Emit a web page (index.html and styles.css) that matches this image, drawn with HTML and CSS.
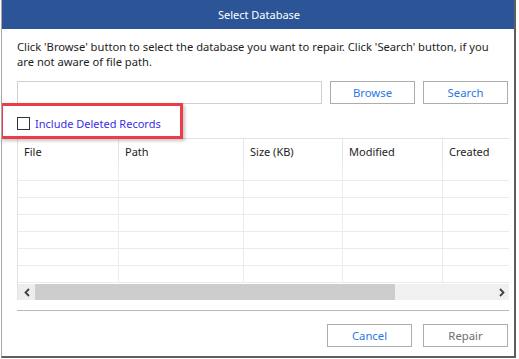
FILE: index.html
```html
<!DOCTYPE html>
<html>
<head>
<meta charset="utf-8">
<link rel="stylesheet" href="styles.css">
</head>
<body>
<div class="window">
  <div class="titlebar">Select Database</div>
  <div class="content">
    <p class="desc"><span class="line">Click 'Browse' button to select the database you want to repair. Click 'Search' button, if you</span><br><span class="line">are not aware of file path.</span></p>
    <div class="pathrow">
      <div class="field"></div>
      <div class="btn">Browse</div>
      <div class="btn">Search</div>
    </div>
    <div class="checkrow">
      <span class="box"></span>
      <span class="label">Include Deleted Records</span>
      <div class="highlight"></div>
    </div>
    <div class="table">
      <div class="row head">
        <div class="c c1">File</div>
        <div class="c c2">Path</div>
        <div class="c c3">Size (KB)</div>
        <div class="c c4">Modified</div>
        <div class="c c5">Created</div>
      </div>
      <div class="row"><div class="c c1"></div><div class="c c2"></div><div class="c c3"></div><div class="c c4"></div><div class="c c5"></div></div>
      <div class="row"><div class="c c1"></div><div class="c c2"></div><div class="c c3"></div><div class="c c4"></div><div class="c c5"></div></div>
      <div class="row"><div class="c c1"></div><div class="c c2"></div><div class="c c3"></div><div class="c c4"></div><div class="c c5"></div></div>
      <div class="row"><div class="c c1"></div><div class="c c2"></div><div class="c c3"></div><div class="c c4"></div><div class="c c5"></div></div>
      <div class="row"><div class="c c1"></div><div class="c c2"></div><div class="c c3"></div><div class="c c4"></div><div class="c c5"></div></div>
      <div class="row"><div class="c c1"></div><div class="c c2"></div><div class="c c3"></div><div class="c c4"></div><div class="c c5"></div></div>
      <div class="row"><div class="c c1"></div><div class="c c2"></div><div class="c c3"></div><div class="c c4"></div><div class="c c5"></div></div>
      <div class="hscroll">
        <div class="arrow left"><svg width="8" height="9" viewBox="0 0 8 9"><path d="M6 1 L2.5 4.5 L6 8" fill="none" stroke="#404040" stroke-width="1.8"/></svg></div>
        <div class="thumb"></div>
        <div class="track"></div>
        <div class="arrow right"><svg width="8" height="9" viewBox="0 0 8 9"><path d="M2 1 L5.5 4.5 L2 8" fill="none" stroke="#404040" stroke-width="1.8"/></svg></div>
      </div>
    </div>
    <div class="sep"></div>
    <div class="actions">
      <div class="btn">Cancel</div>
      <div class="btn disabled">Repair</div>
    </div>
  </div>
</div>
</body>
</html>
```
FILE: styles.css
```css
html, body {
  margin: 0;
  padding: 0;
  background: #ffffff;
}
body {
  font-family: "Noto Sans", "Open Sans", "DejaVu Sans", sans-serif;
  font-size: 11px;
  color: #1e1e1e;
}
.window {
  margin-left: 1px;
  width: 512px;
  height: 356px;
  border-left: 1px solid #a8a8a8;
  border-right: 2px solid #5e5e5e;
  border-bottom: 2px solid #5e5e5e;
  background: #ffffff;
  display: flex;
  flex-direction: column;
  overflow: hidden;
}
.titlebar {
  flex-shrink: 0;
  height: 29px;
  background: #2b5597;
  color: #ffffff;
  font-size: 11px;
  display: flex;
  align-items: center;
  justify-content: center;
  padding-left: 2px;
}
.content {
  padding: 10px 5px 0 15px;
  display: flex;
  flex-direction: column;
}
.desc {
  margin: 0;
  line-height: 15px;
  font-size: 11.2px;
  white-space: nowrap;
}
.pathrow {
  margin-top: 12px;
  display: flex;
  gap: 8px;
  height: 23px;
  margin-right: 1px;
}
.field {
  width: 305px;
  box-sizing: border-box;
  border: 1px solid #d0d0d0;
}
.btn {
  width: 85px;
  height: 23px;
  box-sizing: border-box;
  border: 1px solid #acacac;
  color: #2a78e4;
  display: flex;
  align-items: center;
  justify-content: center;
  font-size: 11.3px;
}
.btn.disabled {
  color: #6e6e6e;
}
.checkrow {
  position: relative;
  height: 34px;
  box-sizing: border-box;
  padding-top: 4px;
  display: flex;
  align-items: center;
  gap: 5px;
}
.box {
  width: 13px;
  height: 13px;
  box-sizing: border-box;
  border: 1px solid #333333;
  background: #ffffff;
}
.label {
  color: #3a2ee6;
  font-size: 11px;
}
.highlight {
  position: absolute;
  left: -17px;
  top: -1px;
  width: 183px;
  height: 36px;
  box-sizing: border-box;
  border: 3px solid #ee3b47;
  box-shadow: 2px 2px 3px rgba(0,0,0,0.22);
}
.table {
  border-top: 1px solid #e2e2e2;
  border-left: 1px solid #e2e2e2;
  width: 491px;
}
.row {
  display: flex;
  height: 17px;
  box-sizing: border-box;
  border-bottom: 1px solid #ebebeb;
}
.row.head {
  height: 25px;
  border-bottom: none;
}
.c {
  box-sizing: border-box;
  border-right: 1px solid #ebebeb;
  height: 100%;
}
.head .c {
  border-right-color: #e6e6e6;
  padding: 5px 0 0 6px;
  font-size: 11px;
  color: #1e1e1e;
}
.c1 { width: 101px; }
.c2 { width: 125px; }
.c3 { width: 99px; }
.c4 { width: 100px; }
.c5 { width: 66px; border-right: none; }
.head .c5 { border-right: none; }
.hscroll {
  margin-top: 1px;
  height: 16px;
  display: flex;
  background: #f0f0f0;
}
.arrow {
  width: 17px;
  display: flex;
  align-items: center;
  justify-content: center;
  background: #ededed;
}
.thumb {
  width: 360px;
  background: #cdcdcd;
}
.track {
  flex: 1;
}
.arrow.right {
  width: 15px;
  background: #f0f0f0;
}
.sep {
  margin-top: 10px;
  height: 1px;
  background: #b9b9b9;
  width: 492px;
}
.actions {
  margin-top: 13px;
  display: flex;
  justify-content: flex-end;
  gap: 11px;
  margin-right: 1px;
}
```
